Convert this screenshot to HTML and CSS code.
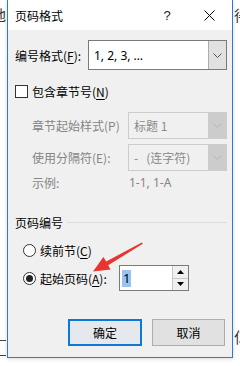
FILE: index.html
```html
<!DOCTYPE html>
<html>
<head>
<meta charset="utf-8">
<link rel="stylesheet" href="styles.css">
</head>
<body>
<div class="page">
  <div class="strip strip-left">
    <span class="doc-char doc-top-left">地</span>
    <span class="doc-line line-a"></span>
    <span class="doc-line line-b"></span>
  </div>
  <div class="dialog">
    <div class="titlebar">
      <span class="title">页码格式</span>
      <span class="tb-btn help">?</span>
      <span class="tb-btn close">
        <svg width="11" height="11" viewBox="0 0 11 11"><path d="M0.5 0.5L10.5 10.5M10.5 0.5L0.5 10.5" stroke="#000" stroke-width="1"/></svg>
      </span>
    </div>
    <div class="body">
      <div class="row row-format">
        <span class="label w-format">编号格式(<u>F</u>):</span>
        <div class="combo">
          <span class="combo-text">1, 2, 3, …</span>
          <span class="combo-btn"><svg width="9" height="5" viewBox="0 0 9 5"><path d="M0.5 0.5L4.5 4.5L8.5 0.5" fill="none" stroke="#555" stroke-width="1"/></svg></span>
        </div>
      </div>
      <div class="row row-check">
        <span class="checkbox"></span>
        <span class="label">包含章节号(<u>N</u>)</span>
      </div>
      <div class="row row-c2 indent">
        <span class="label disabled w-chap">章节起始样式(P)</span>
        <div class="combo combo-dis">
          <span class="combo-text">标题 1</span>
          <span class="combo-btn"><svg width="9" height="5" viewBox="0 0 9 5"><path d="M0.5 0.5L4.5 4.5L8.5 0.5" fill="none" stroke="#b4b4b4" stroke-width="1"/></svg></span>
        </div>
      </div>
      <div class="row row-c3 indent">
        <span class="label disabled w-chap">使用分隔符(E):</span>
        <div class="combo combo-dis">
          <span class="combo-text">-&nbsp;&nbsp;&nbsp;(连字符)</span>
          <span class="combo-btn"><svg width="9" height="5" viewBox="0 0 9 5"><path d="M0.5 0.5L4.5 4.5L8.5 0.5" fill="none" stroke="#b4b4b4" stroke-width="1"/></svg></span>
        </div>
      </div>
      <div class="row row-example indent">
        <span class="label disabled w-chap">示例:</span>
        <span class="label disabled example-val">1-1, 1-A</span>
      </div>
      <div class="group-head">
        <span class="label">页码编号</span>
        <span class="group-line"></span>
      </div>
      <div class="row row-r1">
        <span class="radio"></span>
        <span class="label">续前节(<u>C</u>)</span>
      </div>
      <div class="row row-r2">
        <span class="radio checked"><span class="dot"></span></span>
        <span class="label w-start">起始页码(<u>A</u>):</span>
        <div class="spin">
          <span class="spin-text"><span class="sel">1</span></span>
          <span class="spin-btns">
            <span class="spin-btn"><svg width="7" height="4" viewBox="0 0 7 4"><path d="M3.5 0L7 4H0Z" fill="#000"/></svg></span>
            <span class="spin-btn"><svg width="7" height="4" viewBox="0 0 7 4"><path d="M0 0H7L3.5 4Z" fill="#000"/></svg></span>
          </span>
        </div>
      </div>
      <div class="row row-buttons">
        <span class="btn btn-default">确定</span>
        <span class="btn">取消</span>
      </div>
    </div>
  </div>
  <div class="strip strip-right">
    <span class="doc-char doc-top-right">得</span>
    <span class="doc-char doc-bottom-right">亿</span>
  </div>
  <svg class="arrow" width="240" height="366" viewBox="0 0 240 366">
    <polygon points="142.8,243.8 108.2,265.2 110.6,269.6 93,271.5 103.4,257 106.2,261.4 141.8,242.4" fill="#e8352f"/>
  </svg>
</div>
</body>
</html>
```
FILE: styles.css
```css
html, body {
  margin: 0;
  padding: 0;
  background: #ffffff;
}
body {
  width: 240px;
  height: 366px;
  overflow: hidden;
  font-family: "Noto Sans CJK SC", "Noto Sans", sans-serif;
  font-size: 12px;
  color: #000;
}
.page {
  position: relative;
  display: flex;
  width: 240px;
  height: 366px;
}
.strip {
  width: 7px;
  height: 366px;
  overflow: hidden;
  display: flex;
  flex-direction: column;
  flex: none;
}
.strip-right {
  width: 8px;
}
.doc-char {
  font-size: 15px;
  line-height: 16px;
  color: #333;
  white-space: nowrap;
}
.doc-top-left {
  margin-top: 7px;
  margin-left: -9px;
}
.doc-line {
  display: block;
  height: 1px;
  background: #444;
  width: 6px;
}
.line-a { margin-top: 317px; }
.line-b { margin-top: 14px; }
.doc-top-right {
  margin-top: 7px;
  margin-left: 1px;
}
.doc-bottom-right {
  margin-top: 306px;
  margin-left: 1px;
}
.dialog {
  width: 226px;
  height: 358px;
  box-sizing: border-box;
  border-left: 1px solid #2b7bd4;
  border-right: 1px solid #2b7bd4;
  border-bottom: 1px solid #2b7bd4;
  display: flex;
  flex-direction: column;
  flex: none;
  box-shadow: 0 1px 4px rgba(0,0,0,0.15);
}
.titlebar {
  height: 30px;
  background: #fff;
  display: flex;
  align-items: center;
  padding-left: 7px;
  flex: none;
}
.title {
  flex: 1;
  font-size: 12px;
}
.tb-btn {
  display: flex;
  align-items: center;
  justify-content: center;
  height: 30px;
}
.help {
  width: 40px;
  font-family: "Liberation Sans", sans-serif;
  font-size: 13px;
  color: #222;
}
.close {
  width: 45px;
}
.body {
  flex: 1;
  background: #f0f0f0;
  padding: 0 5px 0 7px;
  display: flex;
  flex-direction: column;
}
.row {
  display: flex;
  align-items: center;
  flex: none;
}
.label {
  white-space: nowrap;
  line-height: 15px;
}
u {
  text-decoration: underline;
  text-underline-offset: 2px;
}
.disabled {
  color: #858585;
}
.indent {
  padding-left: 17px;
}
.w-format { width: 73px; flex: none; }
.w-chap { width: 96px; flex: none; }
.w-start { width: 79px; flex: none; }
.row-format {
  margin-top: 10px;
  height: 30px;
}
.combo {
  flex: 1;
  height: 100%;
  box-sizing: border-box;
  border: 1px solid #7a7a7a;
  background: #fff;
  display: flex;
  align-items: stretch;
}
.combo-text {
  flex: 1;
  display: flex;
  align-items: center;
  padding-left: 5px;
  font-family: "Noto Sans", "Noto Sans CJK SC", sans-serif;
  font-size: 12px;
}
.combo-btn {
  width: 17px;
  background: #e1e1e1;
  border-left: 1px solid #adadad;
  display: flex;
  align-items: center;
  justify-content: center;
}
.combo-dis {
  border-color: #cccccc;
  background: #f0f0f0;
}
.combo-dis .combo-text {
  color: #8a8a8a;
  font-family: "Noto Sans CJK SC", sans-serif;
}
.combo-dis .combo-btn {
  background: #cccccc;
  border-left: 1px solid #cccccc;
}
.row-check {
  margin-top: 12px;
  height: 19px;
}
.checkbox {
  width: 11px;
  height: 11px;
  border: 1px solid #333;
  background: #fff;
  margin-right: 4px;
  flex: none;
}
.row-c2 {
  margin-top: 11px;
  height: 27px;
}
.row-c3 {
  margin-top: 5px;
  height: 27px;
}
.row-example {
  margin-top: 4px;
  height: 15px;
}
.example-val {
  padding-left: 1px;
  font-family: "Noto Sans", sans-serif;
}
.group-head {
  margin-top: 25px;
  height: 15px;
  display: flex;
  align-items: center;
  flex: none;
}
.group-line {
  flex: 1;
  height: 1px;
  background: #dcdcdc;
  margin-left: 4px;
  margin-right: 0;
}
.row-r1 {
  margin-top: 11px;
  height: 18px;
  padding-left: 8px;
}
.radio {
  width: 11px;
  height: 11px;
  border: 1px solid #333;
  border-radius: 50%;
  background: #fff;
  margin-right: 4px;
  flex: none;
  display: flex;
  align-items: center;
  justify-content: center;
}
.dot {
  width: 7px;
  height: 7px;
  border-radius: 50%;
  background: #222;
}
.row-r2 {
  margin-top: 6px;
  height: 26px;
  padding-left: 8px;
}
.spin {
  width: 70px;
  height: 26px;
  box-sizing: border-box;
  border: 1px solid #7a7a7a;
  background: #fff;
  display: flex;
}
.spin-text {
  flex: 1;
  display: flex;
  align-items: center;
  padding-left: 2px;
  font-family: "Noto Sans", sans-serif;
  font-size: 13px;
}
.sel {
  background: #99c4ee;
  padding: 0 1px;
  line-height: 17px;
}
.spin-btns {
  width: 15px;
  display: flex;
  flex-direction: column;
  border-left: 1px solid #c8c8c8;
}
.spin-btn {
  flex: 1;
  display: flex;
  align-items: center;
  justify-content: center;
  background: #f0f0f0;
  border-bottom: 1px solid #c8c8c8;
}
.spin-btn:last-child {
  border-bottom: none;
}
.row-buttons {
  margin-top: 28px;
  height: 27px;
  justify-content: flex-end;
  gap: 10px;
  padding-right: 2px;
}
.btn {
  width: 73px;
  height: 27px;
  box-sizing: border-box;
  border: 1px solid #adadad;
  background: #e1e1e1;
  display: flex;
  align-items: center;
  justify-content: center;
}
.btn-default {
  width: 74px;
  border: 2px solid #0f78d7;
  background: #e5e8ec;
}
.arrow {
  position: absolute;
  left: 0;
  top: 0;
  pointer-events: none;
}
```
